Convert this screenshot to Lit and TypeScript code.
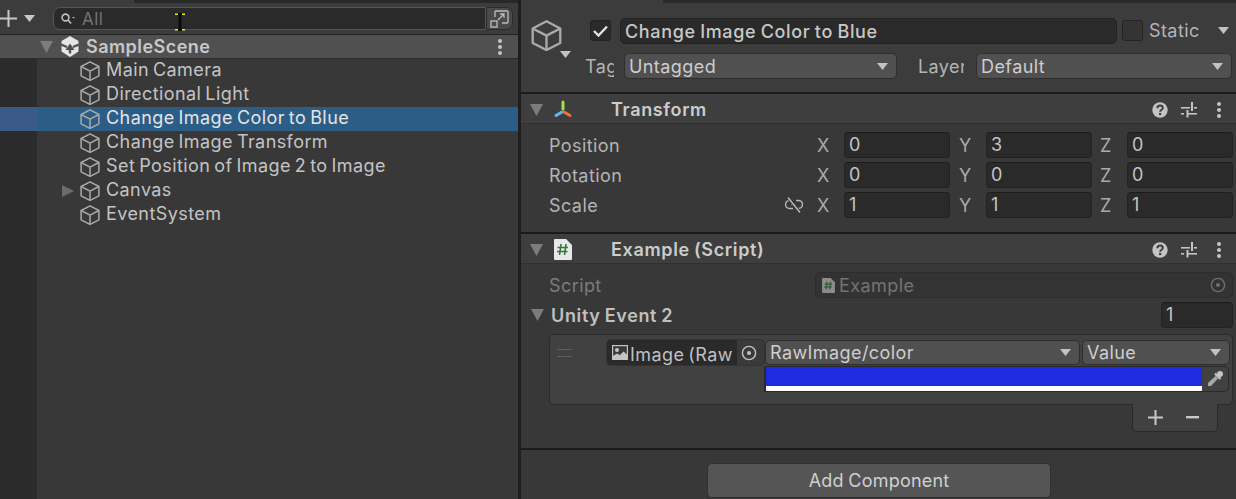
import { LitElement, html, css, svg } from 'lit';
import { customElement } from 'lit/decorators.js';

const cube = (size: number) => html`<svg class="cube" width=${size} height=${size} viewBox="0 0 20 20" fill="none" stroke="#aaaaaa" stroke-width="1.5" stroke-linejoin="round">
  <path d="M10 .8 18.9 5.5V14.8L10 19.4 1.1 14.8V5.5Z" /><path d="M1.1 5.5 10 10.1 18.9 5.5M10 10.1V19.4" />
</svg>`;

const tri = html`<svg class="tri" width="11" height="7" viewBox="0 0 11 7"><path d="M0 0H11L5.5 7Z" fill="#c2c2c2" /></svg>`;
const fold = html`<svg class="fold" width="13" height="12" viewBox="0 0 13 12"><path d="M0 0H13L6.5 12Z" fill="#7c7c7c" /></svg>`;
const dots = html`<svg class="dots" width="4" height="16" viewBox="0 0 4 16" fill="#c4c4c4"><circle cx="2" cy="2" r="2" /><circle cx="2" cy="8" r="2" /><circle cx="2" cy="14" r="2" /></svg>`;

const headerIcons = html`<div class="tools">
  <svg width="16" height="16" viewBox="0 0 16 16"><circle cx="8" cy="8" r="7.7" fill="#c4c4c4" /><path d="M5.3 6.2C5.4 4.6 6.6 3.6 8 3.6 9.7 3.6 10.8 4.7 10.8 6 10.8 7.7 8.1 7.8 8.1 9.8" fill="none" stroke="#3e3e3e" stroke-width="2" /><rect x="7" y="10.9" width="2.2" height="2.2" fill="#3e3e3e" /></svg>
  <svg width="16" height="16" viewBox="0 0 16 16" fill="#c4c4c4"><rect x="0" y="5" width="9" height="1.6" /><rect x="10" y="0" width="2" height="9" /><rect x="13" y="5" width="3" height="1.6" /><rect x="0" y="11" width="3" height="1.6" /><rect x="5.5" y="8" width="2" height="7.5" /><rect x="7" y="11" width="9" height="1.6" /></svg>
  ${dots}
</div>`;

const target = (color: string) => html`<svg width="16" height="16" viewBox="0 0 16 16"><circle cx="8" cy="8" r="6.6" fill="none" stroke=${color} stroke-width="1.4" /><circle cx="8" cy="8" r="2" fill=${color} /></svg>`;

const hashDoc = (size: number, paper: string, ink: string) => html`<svg width=${size} height=${Math.round(size * 1.14)} viewBox="0 0 18 21">
  <path d="M1 0H12L18 6V20A1 1 0 0 1 17 21H1A1 1 0 0 1 0 20V1A1 1 0 0 1 1 0Z" fill=${paper} />
  ${svg`<path d="M7 5 5.5 16M12 5 10.5 16M3.5 8.5H14M3 12.5H13.5" stroke=${ink} stroke-width="1.6" fill="none" />`}
</svg>`;

@customElement('app-root')
export class AppRoot extends LitElement {
  static styles = css`
    :host {
      display: block;
      width: 1236px;
      height: 499px;
      overflow: hidden;
      position: relative;
      font-family: Inter, "Liberation Sans", sans-serif;
      font-size: 18px;
      letter-spacing: .42px;
      word-spacing: -1.5px;
      color: #c4c4c4;
      background: #383838;
    }
    svg { display: block; flex: none; }
    .app { display: flex; height: 499px; }

    /* hierarchy */
    .left { width: 518px; flex: none; display: flex; flex-direction: column; }
    .strip { height: 3px; flex: none; display: flex; background: #3c3c3c; }
    .strip i { display: block; flex: 1; background: #282828; }
    .left .strip b { display: block; width: 134px; }
    .right .strip b { display: block; width: 142px; }
    .toolbar {
      height: 31px; flex: none; display: flex; align-items: center;
      background: #3c3c3c; border-bottom: 1px solid #232323; box-sizing: content-box;
    }
    .add { display: flex; align-items: center; gap: 7px; width: 53px; flex: none; }
    .search {
      width: 433px; height: 23px; flex: none; box-sizing: border-box; display: flex; align-items: center;
      background: #2a2a2a; border: 1px solid #555; border-radius: 7px 0 0 7px; padding-left: 7px;
      color: #737373; font-size: 17px;
    }
    .search span { margin-left: 7px; }
    .link {
      width: 27px; height: 23px; box-sizing: border-box; flex: none; display: flex; align-items: center; justify-content: center;
      background: #4a4a4a; border: 1px solid #2b2b2b; border-radius: 0 7px 7px 0;
    }
    .scene {
      height: 23px; flex: none; display: flex; align-items: center; background: #505050;
      border-bottom: 1px solid #2d2d2d; font-weight: 600; padding-left: 40px; letter-spacing: .45px;
    }
    .scene .fold { margin-right: 8px; }
    .scene span { margin-left: 7px; flex: 1; color: #c8c8c8; }
    .scene .dots { margin-right: 16px; }
    .tree { flex: 1; background: linear-gradient(90deg, #2b2b2b 37px, #383838 37px); }
    .row { height: 24px; display: flex; align-items: center; padding-left: 62px; }
    .row span { margin-bottom: 3px; }
    .row.sel { background: linear-gradient(90deg, #3a5a8c 37px, #2c5d87 37px); color: #e4e4e4; }
    .arrow { width: 12px; height: 12px; flex: none; margin-right: 6px; }
    .row .cube { margin-right: 6px; }
    .divider { width: 3px; flex: none; background: #1e1e1e; }

    /* inspector */
    .right { flex: 1; display: flex; flex-direction: column; min-width: 0; }
    .go { height: 89px; flex: none; background: #3c3c3c; box-sizing: border-box; padding: 13px 0 0 10px; display: grid; grid-template-columns: 48px 1fr; }
    .go-icon { padding-top: 4px; }
    .go-icon .tri { margin: 0 0 0 29px; }
    .go-lines { display: flex; flex-direction: column; gap: 8px; }
    .go-top { display: flex; align-items: center; height: 29px; margin-left: 11px; }
    .check {
      width: 21px; height: 21px; box-sizing: border-box; flex: none; display: flex; align-items: center; justify-content: center;
      background: #2a2a2a; border: 1px solid #232323; border-radius: 3px; margin-right: 9px;
    }
    .check.off { background: #343434; margin: 0 6px 0 5px; }
    .name {
      width: 497px; height: 26px; box-sizing: border-box; flex: none; background: #2a2a2a;
      border: 1px solid #222; border-radius: 5px; padding-left: 4px; font-weight: 500; line-height: 26px; color: #c8c8c8;
      white-space: nowrap; letter-spacing: .65px; word-spacing: -1px;
    }
    .static { width: 69px; color: #b0b0b0; overflow: hidden; }
    .go-tags { display: flex; align-items: center; height: 26px; }
    .clip { overflow: hidden; white-space: nowrap; color: #b4b4b4; flex: none; }
    .tag { width: 29px; margin-left: 6px; }
    .layer { width: 46px; margin-left: 21px; }
    .drop {
      height: 26px; box-sizing: border-box; flex: none; display: flex; align-items: center; justify-content: space-between;
      background: #505050; border: 1px solid #2e2e2e; border-radius: 5px; padding: 0 8px 0 4px; color: #cecece;
    }
    .drop.untagged { width: 273px; margin-left: 10px; }
    .drop.default { width: 256px; margin-left: 12px; }
    .drop.method { width: 315px; }
    .drop.value { width: 148px; }
    .sep { height: 2px; flex: none; background: #1b1b1b; }
    .head {
      height: 30px; flex: none; box-sizing: border-box; display: flex; align-items: center; background: #3e3e3e;
      border-bottom: 1px solid #303030; padding: 2px 0 0 9px; font-weight: 600; color: #cccccc;
      letter-spacing: .65px; word-spacing: -1px;
    }
    .head .fold { margin-right: 10px; }
    .head .h-icon { width: 20px; flex: none; margin-right: 38px; display: flex; justify-content: center; }
    .head .title { flex: 1; }
    .tools { display: flex; align-items: center; gap: 13px; margin-right: 15px; }
    .tools .dots { margin-left: 7px; }
    .transform { height: 108px; box-sizing: border-box; flex: none; padding-top: 8px; display: flex; flex-direction: column; gap: 4px; }
    .prop { height: 26px; display: flex; align-items: center; padding-left: 28px; color: #b4b4b4; }
    .prop .label { flex: 1; }
    .unlink { margin-right: 14px; }
    .xyz { display: flex; align-items: center; }
    .xyz:last-child { margin-right: 3px; }
    .xyz label { width: 27px; color: #aaa; }
    .xyz + .xyz { margin-left: 9px; }
    .xyz:last-child { margin-left: 8px; }
    .num {
      height: 26px; box-sizing: border-box; flex: none; background: #2a2a2a; border: 1px solid #232323;
      border-top-color: #1c1c1c; border-radius: 4px; padding-left: 4px; line-height: 24px; color: #c4c4c4;
    }
    .xyz .num { width: 106px; }
    .script-body { flex: 1; display: flex; flex-direction: column; min-height: 0; }
    .script-row { height: 26px; margin-top: 8px; display: flex; align-items: center; padding-left: 28px; color: #7c7c7c; }
    .script-row .label { width: 266px; flex: none; }
    .ref {
      width: 418px; height: 26px; box-sizing: border-box; flex: none; display: flex; align-items: center; gap: 4px;
      background: #333; border: 1px solid #2d2d2d; border-radius: 5px; padding-left: 6px; color: #737373;
    }
    .ref span { flex: 1; }
    .ref svg:last-child { margin-right: 6px; }
    .event { height: 26px; margin-top: 4px; display: flex; align-items: center; padding-left: 10px; font-weight: 600; color: #c0c0c0; letter-spacing: .65px; word-spacing: -1px; }
    .event .fold { margin-right: 7px; }
    .event span { flex: 1; padding-top: 1px; }
    .event .num { width: 72px; margin-right: 3px; font-weight: 400; }
    .list {
      margin: 6px 0 0 28px; width: 684px; height: 71px; box-sizing: border-box; background: #414141;
      border: 1px solid #2a2a2a; border-radius: 5px; padding: 4px 3px 0 7px; display: flex;
    }
    .grip { width: 15px; height: 6px; flex: none; margin: 10px 34px 0 0; border-top: 1px solid #5e5e5e; border-bottom: 1px solid #5e5e5e; }
    .objref {
      width: 159px; height: 27px; box-sizing: border-box; flex: none; display: flex; align-items: center;
      background: #2a2a2a; border: 1px solid #333; border-radius: 5px; padding-left: 5px; color: #c0c0c0;
    }
    .objref span { flex: 1; overflow: hidden; white-space: nowrap; margin-left: 2px; padding-top: 3px; }
    .objref .tgt { width: 27px; height: 25px; flex: none; background: #3a3a3a; display: flex; align-items: center; justify-content: center; border-radius: 0 4px 4px 0; padding-right: 3px; box-sizing: border-box; }
    .call { flex: 1; display: flex; flex-direction: column; padding-top: 1px; gap: 1px; min-width: 0; }
    .call-top { display: flex; gap: 2px; }
    .call .drop { height: 25px; }
    .color {
      height: 26px; box-sizing: border-box; margin-left: -1px; display: flex; background: #2a2a2a;
      border: solid #2a2a2a; border-width: 1px 1px 1px 2px; border-radius: 0 5px 5px 0;
    }
    .swatch { flex: 1; display: flex; flex-direction: column; }
    .swatch i { display: block; height: 19px; background: #1f2bdf; }
    .swatch b { display: block; height: 5px; background: #fff; }
    .pick { width: 26px; flex: none; display: flex; align-items: center; justify-content: center; background: #414141; border-radius: 0 4px 4px 0; }
    .footer {
      width: 86px; height: 28px; box-sizing: border-box; margin: -1px 0 0 611px; display: flex; align-items: center; gap: 23px;
      background: #414141; border: 1px solid #2a2a2a; border-top: none; border-radius: 0 0 5px 5px; padding: 0 0 0 15px;
    }
    .spacer { flex: 1; }
    .bottom { height: 49px; flex: none; display: flex; justify-content: center; padding-top: 13px; box-sizing: border-box; }
    .add-comp {
      width: 344px; height: 35px; box-sizing: border-box; margin-left: 1px; background: #555; border: 1px solid #303030; border-radius: 5px;
      display: flex; align-items: center; justify-content: center; color: #d0d0d0; letter-spacing: .2px; word-spacing: -.6px;
    }
    .ibeam { position: absolute; left: 175px; top: 13px; }
  `;

  private row(name: string, sel = false, arrow = false) {
    return html`<div class="row ${sel ? 'sel' : ''}">
      <div class="arrow">${arrow ? html`<svg width="12" height="12" viewBox="0 0 12 12"><path d="M0 0 12 6 0 12Z" fill="#6c6c6c" /></svg>` : ''}</div>
      ${cube(20)}<span>${name}</span>
    </div>`;
  }

  private prop(label: string, vals: string[], unlink = false) {
    return html`<div class="prop">
      <span class="label">${label}</span>
      ${unlink ? html`<svg class="unlink" width="18" height="16" viewBox="0 0 18 16" fill="none" stroke="#b8b8b8" stroke-width="1.5"><path d="M6 3.5H4.5A4 4 0 0 0 4.5 11.5H8M11 3.5H13.5A4 4 0 0 1 13.5 11.5H12.5M6 7.5H8" /><path d="M3 .5 15 15.5" stroke="#383838" stroke-width="3.5" /><path d="M3 .5 15 15.5" /></svg>` : ''}
      ${['X', 'Y', 'Z'].map((a, i) => html`<div class="xyz"><label>${a}</label><div class="num">${vals[i]}</div></div>`)}
    </div>`;
  }

  render() {
    return html`<div class="app">
      <div class="left">
        <div class="strip"><b></b><i></i></div>
        <div class="toolbar">
          <div class="add">
            <svg width="17" height="17" viewBox="0 0 17 17"><path d="M7.5 0H9.5V7.5H17V9.5H9.5V17H7.5V9.5H0V7.5H7.5Z" fill="#c8c8c8" /></svg>
            <svg width="11" height="7" viewBox="0 0 11 7"><path d="M0 0H11L5.5 7Z" fill="#c8c8c8" /></svg>
          </div>
          <div class="search">
            <svg width="14" height="12" viewBox="0 0 14 12" fill="none" stroke="#c0c0c0" stroke-width="1.6"><circle cx="4.5" cy="4.5" r="3.4" /><path d="M7 7 10 10.5" /><path d="M11 4H14L12.5 5.5Z" fill="#c0c0c0" stroke="none" /></svg>
            <span>All</span>
          </div>
          <div class="link">
            <svg width="19" height="18" viewBox="0 0 19 18" fill="none" stroke="#bdbdbd" stroke-width="1.3"><path d="M5 7V2A1 1 0 0 1 6 1H17A1 1 0 0 1 18 2V12A1 1 0 0 1 17 13H12" /><rect x="1" y="11" width="6" height="6" /><path d="M8 10 14 4M10 4H14V8" /></svg>
          </div>
        </div>
        <div class="scene">
          ${fold}
          <svg width="18" height="21" viewBox="0 0 18 21">
            <path d="M9 0 17.5 5V15.5L9 21 .5 15.5V5Z" fill="#e6e6e6" />
            <path d="M9 7.5 13.5 14H4.5Z" fill="#505050" />
            <path d="M0 8.5 6 11M18 8.5 12 11M9 14V17.5" stroke="#505050" stroke-width="2.4" fill="none" />
            <path d="M0 0H3L0 3ZM18 0H15L18 3ZM0 21V17L4 21ZM18 21V17L14 21Z" fill="#505050" />
          </svg>
          <span>SampleScene</span>
          ${dots}
        </div>
        <div class="tree">
          ${this.row('Main Camera')}
          ${this.row('Directional Light')}
          ${this.row('Change Image Color to Blue', true)}
          ${this.row('Change Image Transform')}
          ${this.row('Set Position of Image 2 to Image')}
          ${this.row('Canvas', false, true)}
          ${this.row('EventSystem')}
        </div>
      </div>
      <div class="divider"></div>
      <div class="right">
        <div class="strip"><b></b><i></i></div>
        <div class="go">
          <div class="go-icon">${cube(31)}${tri}</div>
          <div class="go-lines">
            <div class="go-top">
              <div class="check"><svg width="15" height="12" viewBox="0 0 15 12" fill="none" stroke="#e0e0e0" stroke-width="2.4"><path d="M1 6 5.5 10.5 14 1.5" /></svg></div>
              <div class="name">Change Image Color to Blue</div>
              <div class="check off"></div>
              <div class="static clip">Static</div>
              ${tri}
            </div>
            <div class="go-tags">
              <div class="clip tag">Tag</div>
              <div class="drop untagged">Untagged ${tri}</div>
              <div class="clip layer">Layer</div>
              <div class="drop default">Default ${tri}</div>
            </div>
          </div>
        </div>
        <div class="sep"></div>
        <div class="head">
          ${fold}
          <div class="h-icon">
            <svg width="20" height="20" viewBox="0 0 20 20" fill="none" stroke-width="3" stroke-linecap="round"><path d="M10 2V9" stroke="#9ee34a" /><path d="M9 12 3 15.5" stroke="#58bcf0" /><path d="M11 12 17 15.5" stroke="#f0703a" /></svg>
          </div>
          <span class="title">Transform</span>
          ${headerIcons}
        </div>
        <div class="transform">
          ${this.prop('Position', ['0', '3', '0'])}
          ${this.prop('Rotation', ['0', '0', '0'])}
          ${this.prop('Scale', ['1', '1', '1'], true)}
        </div>
        <div class="sep"></div>
        <div class="head">
          ${fold}
          <div class="h-icon">${hashDoc(18, '#e8e8e8', '#2f7a3c')}</div>
          <span class="title">Example (Script)</span>
          ${headerIcons}
        </div>
        <div class="script-body">
          <div class="script-row">
            <span class="label">Script</span>
            <div class="ref">${hashDoc(13, '#8c8c8c', '#2f5a35')}<span>Example</span>${target('#6e6e6e')}</div>
          </div>
          <div class="event">${fold}<span>Unity Event 2</span><div class="num">1</div></div>
          <div class="list">
            <div class="grip"></div>
            <div class="objref">
              <svg width="16" height="15" viewBox="0 0 16 15"><rect x=".6" y=".6" width="14.8" height="13.8" fill="#3a3a3a" stroke="#c4c4c4" stroke-width="1.2" /><circle cx="5" cy="5" r="2" fill="#c4c4c4" /><path d="M1 14V11L5 8.5 8 10 11.5 6.5 15 9.5V14Z" fill="#c4c4c4" /></svg>
              <span>Image (Raw</span>
              <div class="tgt">${target('#c4c4c4')}</div>
            </div>
            <div class="call">
              <div class="call-top">
                <div class="drop method">RawImage/color ${tri}</div>
                <div class="drop value">Value ${tri}</div>
              </div>
              <div class="color">
                <div class="swatch"><i></i><b></b></div>
                <div class="pick"><svg width="18" height="18" viewBox="0 0 18 18"><circle cx="14" cy="4" r="3" fill="#c4c4c4" /><path d="M9 3.5 14.5 9" stroke="#c4c4c4" stroke-width="2.4" /><path d="M9.5 6 12 8.5 5 16H2V13Z" fill="#a8a8a8" /></svg></div>
              </div>
            </div>
          </div>
          <div class="footer">
            <svg width="15" height="15" viewBox="0 0 15 15"><path d="M6.5 0H8.5V6.5H15V8.5H8.5V15H6.5V8.5H0V6.5H6.5Z" fill="#c8c8c8" /></svg>
            <svg width="13" height="3" viewBox="0 0 13 3"><rect width="13" height="2.4" fill="#c8c8c8" /></svg>
          </div>
          <div class="spacer"></div>
          <div class="sep"></div>
          <div class="bottom"><div class="add-comp">Add Component</div></div>
        </div>
      </div>
    </div>
    <svg class="ibeam" width="10" height="18" viewBox="0 0 10 18">
      <path d="M5 1V17" stroke="#0c0c0c" stroke-width="3" />
      <path d="M3 1.2H7M3 16.8H7" stroke="#0c0c0c" stroke-width="2.4" />
      <path d="M0 1.2H3M7 1.2H10M0 16.8H3M7 16.8H10" stroke="#e6e61a" stroke-width="1.6" />
    </svg>`;
  }
}
